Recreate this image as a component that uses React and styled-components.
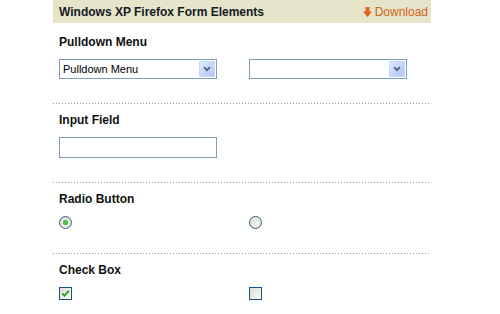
import React from "react";
import styled, { createGlobalStyle } from "styled-components";

const Global = createGlobalStyle`
  html, body { margin: 0; padding: 0; background: #ffffff; }
  body { font-family: "Liberation Sans", Arial, sans-serif; color: #111; }
`;

const Panel = styled.div`
  margin-left: 53px;
  width: 378px;
`;

const Header = styled.div`
  height: 23px;
  background: #e6e4c9;
  display: flex;
  align-items: center;
  justify-content: space-between;
  padding: 0 3px 0 6px;
  box-sizing: border-box;
`;

const Title = styled.h1`
  margin: 0;
  font-size: 12px;
  font-weight: bold;
  color: #151a24;
`;

const DownloadLink = styled.a`
  display: flex;
  align-items: center;
  gap: 3px;
  font-size: 12px;
  color: #d2641a;
  text-decoration: none;
`;

const Section = styled.section`
  padding: ${(p) => (p.$first ? "12px" : "9px")} 6px 24px;
`;

const Divider = styled.div`
  height: 1px;
  background-image: repeating-linear-gradient(
    to right,
    #9a9a9a 0 1px,
    transparent 1px 3px
  );
`;

const Heading = styled.h2`
  margin: 0 0 10px;
  font-size: 12px;
  line-height: 14px;
  font-weight: bold;
  color: #111;
`;

const Row = styled.div`
  display: grid;
  grid-template-columns: 190px 190px;
  align-items: center;
`;

const Select = styled.div`
  width: 158px;
  height: 20px;
  box-sizing: border-box;
  border: 1px solid #7f9db9;
  background: #fff;
  display: flex;
  align-items: center;
  padding: 1px;
`;

const SelectText = styled.span`
  flex: 1;
  font-size: 11px;
  padding-left: 2px;
  color: #000;
  white-space: nowrap;
`;

const ArrowButton = styled.span`
  width: 16px;
  height: 16px;
  box-sizing: border-box;
  border: 1px solid #c3d3fd;
  border-radius: 1px;
  background: linear-gradient(135deg, #e2ebfe 0%, #c4d5fb 55%, #b4c8f6 100%);
  display: flex;
  align-items: center;
  justify-content: center;
`;

const TextInput = styled.div`
  width: 158px;
  height: 21px;
  box-sizing: border-box;
  border: 1px solid #7f9db9;
  background: #fff;
`;

const Radio = styled.span`
  width: 13px;
  height: 13px;
  box-sizing: border-box;
  border-radius: 50%;
  border: 1px solid #2f5c86;
  background: radial-gradient(circle at 65% 65%, #f6f6f2 0%, #e6e6df 60%, #d8d8d0 100%);
  display: flex;
  align-items: center;
  justify-content: center;
`;

const RadioDot = styled.span`
  width: 5px;
  height: 5px;
  border-radius: 50%;
  background: radial-gradient(circle, #5fd25a 0%, #22a024 100%);
`;

const Check = styled.span`
  width: 13px;
  height: 13px;
  box-sizing: border-box;
  border: 1px solid #1d5180;
  background: linear-gradient(135deg, #dcdcd5 0%, #ececE6 50%, #fbfbf9 100%);
  display: flex;
  align-items: center;
  justify-content: center;
`;

const Chevron = () => (
  <svg width="8" height="6" viewBox="0 0 8 6">
    <path d="M1 1.2 L4 4.2 L7 1.2" fill="none" stroke="#4d6185" strokeWidth="1.8" />
  </svg>
);

const DownArrow = () => (
  <svg width="9" height="10" viewBox="0 0 9 10">
    <path d="M2.5 0 H6.5 V4.5 H9 L4.5 10 L0 4.5 H2.5 Z" fill="#e0621c" />
  </svg>
);

const Tick = () => (
  <svg width="9" height="9" viewBox="0 0 9 9">
    <path d="M1.2 4.3 L3.5 6.6 L7.8 1.8" fill="none" stroke="#21a121" strokeWidth="1.8" />
  </svg>
);

export default function App() {
  return (
    <>
      <Global />
      <Panel>
        <Header>
          <Title>Windows XP Firefox Form Elements</Title>
          <DownloadLink href="#">
            <DownArrow />
            Download
          </DownloadLink>
        </Header>

        <Section $first>
          <Heading>Pulldown Menu</Heading>
          <Row>
            <Select>
              <SelectText>Pulldown Menu</SelectText>
              <ArrowButton>
                <Chevron />
              </ArrowButton>
            </Select>
            <Select>
              <SelectText />
              <ArrowButton>
                <Chevron />
              </ArrowButton>
            </Select>
          </Row>
        </Section>
        <Divider />

        <Section>
          <Heading>Input Field</Heading>
          <TextInput />
        </Section>
        <Divider />

        <Section>
          <Heading>Radio Button</Heading>
          <Row>
            <Radio>
              <RadioDot />
            </Radio>
            <Radio />
          </Row>
        </Section>
        <Divider />

        <Section>
          <Heading>Check Box</Heading>
          <Row>
            <Check>
              <Tick />
            </Check>
            <Check />
          </Row>
        </Section>
      </Panel>
    </>
  );
}
